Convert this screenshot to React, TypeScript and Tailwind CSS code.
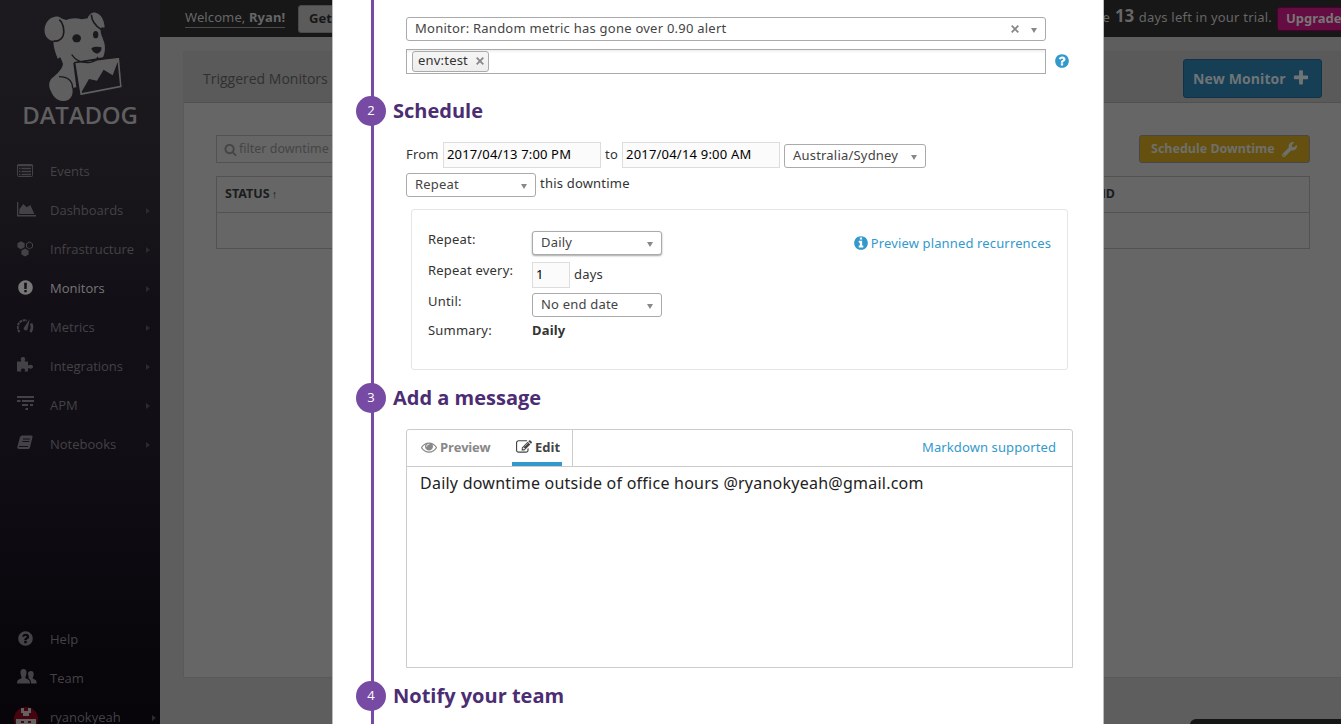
import React from "react";
import { FaWrench } from "react-icons/fa";

const CIRCLE =
  "M1664 896q0 209-103 385.5t-279.5 279.5-385.5 103-385.5-103-279.5-279.5-103-385.5 103-385.5 279.5-279.5 385.5-103 385.5 103 279.5 279.5 103 385.5z";
const PATHS = {
  question:
    "M1024 1376v-192q0-14-9-23t-23-9h-192q-14 0-23 9t-9 23v192q0 14 9 23t23 9h192q14 0 23-9t9-23zm256-672q0-88-55.5-163t-138.5-116-170-41q-243 0-371 213-15 24 8 42l132 100q7 6 19 6 16 0 25-12 53-68 86-92 34-24 86-24 48 0 85.5 26t37.5 59q0 38-20 61t-68 45q-63 28-115.5 86.5t-52.5 125.5v36q0 14 9 23t23 9h192q14 0 23-9t9-23q0-19 21.5-49.5t54.5-49.5q32-18 49-28.5t46-35 44.5-48 28-60.5 12.5-81z" +
    CIRCLE,
  info:
    "M1152 1376v-160q0-14-9-23t-23-9h-96v-512q0-14-9-23t-23-9h-320q-14 0-23 9t-9 23v160q0 14 9 23t23 9h96v320h-96q-14 0-23 9t-9 23v160q0 14 9 23t23 9h448q14 0 23-9t9-23zm-128-896v-160q0-14-9-23t-23-9h-192q-14 0-23 9t-9 23v160q0 14 9 23t23 9h192q14 0 23-9t9-23z" +
    CIRCLE,
  exclamation:
    "M896 128q209 0 385.5 103t279.5 279.5 103 385.5-103 385.5-279.5 279.5-385.5 103-385.5-103-279.5-279.5-103-385.5 103-385.5 279.5-279.5 385.5-103zm128 1247v-190q0-14-9-23.5t-22-9.5h-192q-13 0-23 10t-10 23v190q0 13 10 23t23 10h192q13 0 22-9.5t9-23.5zm-2-344l18-621q0-12-10-18-10-8-24-8h-220q-14 0-24 8-10 6-10 18l17 621q0 10 10 17.5t24 7.5h185q14 0 23.5-7.5t10.5-17.5z",
  plus: "M1600 736v192q0 40-28 68t-68 28h-416v416q0 40-28 68t-68 28h-192q-40 0-68-28t-28-68v-416h-416q-40 0-68-28t-28-68v-192q0-40 28-68t68-28h416v-416q0-40 28-68t68-28h192q40 0 68 28t28 68v416h416q40 0 68 28t28 68z",
  search:
    "M1216 832q0-185-131.5-316.5t-316.5-131.5-316.5 131.5-131.5 316.5 131.5 316.5 316.5 131.5 316.5-131.5 131.5-316.5zm512 832q0 52-38 90t-90 38q-54 0-90-38l-343-342q-179 124-399 124-143 0-273.5-55.5t-225-150-150-225-55.5-273.5 55.5-273.5 150-225 225-150 273.5-55.5 273.5 55.5 225 150 150 225 55.5 273.5q0 220-124 399l343 343q37 37 37 90z",
  eye: "M1664 960q-152-236-381-353 61 104 61 225 0 185-131.5 316.5t-316.5 131.5-316.5-131.5-131.5-316.5q0-121 61-225-229 117-381 353 133 205 333.5 326.5t434.5 121.5 434.5-121.5 333.5-326.5zm-720-384q0-20-14-34t-34-14q-125 0-214.5 89.5t-89.5 214.5q0 20 14 34t34 14 34-14 14-34q0-86 61-147t147-61q20 0 34-14t14-34zm848 384q0 34-20 69-140 230-376.5 368.5t-499.5 138.5-499.5-139-376.5-368q-20-35-20-69t20-69q140-229 376.5-368t499.5-139 499.5 139 376.5 368q20 35 20 69z",
  edit: "M888 1184l116-116-152-152-116 116v56h96v96h56zm440-720q-16-16-33 1l-350 350q-17 17-1 33t33-1l350-350q17-17 1-33zm80 594v190q0 119-84.5 203.5t-203.5 84.5h-832q-119 0-203.5-84.5t-84.5-203.5v-832q0-119 84.5-203.5t203.5-84.5h832q63 0 117 25 15 7 18 23 3 17-9 29l-49 49q-14 14-32 8-23-6-45-6h-832q-66 0-113 47t-47 113v832q0 66 47 113t113 47h832q66 0 113-47t47-113v-126q0-13 9-22l64-64q15-15 35-7t20 29zm-96-738l288 288-672 672h-288v-288zm444 132l-92 92-288-288 92-92q28-28 68-28t68 28l152 152q28 28 28 68t-28 68z",
};

function Glyph({ name, className }: { name: keyof typeof PATHS; className: string }) {
  return (
    <svg viewBox="0 0 1792 1792" className={className} fill="currentColor" fillRule="evenodd">
      <path d={PATHS[name]} />
    </svg>
  );
}

function DogLogo() {
  return (
    <svg viewBox="126 33 240 273" className="h-[91px] w-20" fill="#5f5f60">
      <path d="M158 122 C140 124 128 104 131 84 C134 66 146 52 162 50 C176 48 180 56 186 57 L196 60 C208 54 226 52 242 58 L260 55 C264 44 272 36 284 38 C300 42 310 60 311 82 C306 84 300 80 299 86 C297 98 305 112 309 126 C314 140 312 160 306 172 L221 186 L217 190 L226 262 L214 264 C218 288 208 302 188 303 C166 304 156 288 150 274 C140 256 144 240 158 230 C172 218 184 206 186 192 L184 186 L178 172 L170 176 L164 160 C160 146 156 134 158 122Z" />
      <path d="M221 188 L356 171 L364 263 L237 288Z" stroke="#1b191e" strokeWidth="4" />
      <path d="M350 186 L335 226 L308 209 L288 242 L264 237 L242 275 L243 279 L357 257Z" fill="#1b191e" />
      <path d="M175 59 C186 68 192 90 186 108 C181 120 168 126 158 122" fill="none" stroke="#1b191e" strokeWidth="5" />
      <path d="M271 44 C272 64 288 80 300 88" fill="none" stroke="#1b191e" strokeWidth="5" />
      <path d="M212 164 C226 184 246 190 268 187 C282 184 290 178 290 170 M174 230 C202 230 214 244 215 264" fill="none" stroke="#1b191e" strokeWidth="4" />
      <ellipse cx="227" cy="115" rx="13" ry="12" fill="#1b191e" />
      <ellipse cx="284" cy="104" rx="8" ry="11" fill="#1b191e" />
      <path d="M271 145 C280 139 294 140 301 142 C303 151 296 160 288 161 C281 160 273 154 271 145Z" fill="#1b191e" />
    </svg>
  );
}

const icons: Record<string, React.ReactNode> = {
  Events: (
    <svg viewBox="0 0 16 14" className="h-[14px] w-4" fill="none" stroke="currentColor">
      <rect x="0.5" y="0.5" width="15" height="12" rx="1" />
      <path d="M0 1.500h16M2 4.500h1.500M4.500 4.500h9.500M2 7.500h1.500M4.500 7.500h9.500M2 10.500h1.500M4.500 10.500h9.500" strokeWidth="1.400" />
    </svg>
  ),
  Dashboards: (
    <svg viewBox="0 0 19 15" className="h-[15px] w-[19px]" fill="currentColor">
      <path d="M0 0h1.300v13H19v1.400H0zM2.300 12V7.200L6.300 2l3.500 3.200L13.400 3l4 9z" />
    </svg>
  ),
  Infrastructure: (
    <svg viewBox="0 0 17 16" className="h-4 w-[17px]" fill="currentColor">
      <path d="M4 .2 7.600 2.200v4L4 8.200.4 6.200v-4zM8 7.400l3.600 2v4L8 15.500l-3.600-2v-4z" />
      <path d="M12.500 1 15.500 2.700v3.400L12.500 7.800 9.500 6.100V2.700z" fill="none" stroke="currentColor" />
    </svg>
  ),
  Monitors: <Glyph name="exclamation" className="h-[17px] w-[17px]" />,
  Metrics: (
    <svg viewBox="0 0 17 15" className="h-[15px] w-[17px]" fill="none" stroke="currentColor">
      <path d="M2.600 13A7 7 0 0 1 10 1.600" strokeWidth="2" strokeDasharray="2.800 0.700" />
      <path d="M14 4.500q2.200 4-.5 8.500" strokeWidth="2.600" />
      <path d="M12.800 0 10.500 10.500a2.100 2.100 0 0 1-3.800-1.500z" fill="currentColor" stroke="none" />
    </svg>
  ),
  Integrations: (
    <svg viewBox="0 0 16 15" className="mb-[3px] h-[15px] w-4" fill="currentColor">
      <path d="M0 4.500h4.500C3 2 4 0 6 0s3 2 1.500 4.500H11V8.500c3-1.500 5-.5 5 1.200s-2 2.800-5 1.300v3.500H7.500c1-2 .5-3-1.500-3s-2.500 1-1.500 3H0z" />
    </svg>
  ),
  APM: (
    <svg viewBox="0 0 17 14" className="mb-[3px] h-[14px] w-[17px]" stroke="currentColor" strokeWidth="2" fill="none">
      <path d="M0 1h17M0 5h3.500M5 5h12M5 9h6M13 9h3M8.500 13h2.500" />
    </svg>
  ),
  Notebooks: (
    <svg viewBox="0 0 16 15" className="mb-[2px] h-[15px] w-4" fill="currentColor">
      <path d="M5 .5h9.500q1.500 0 1 1.500L13 12.500q-.5 1.500-2 1.500H2Q0 14 .3 12L3 2Q3.500.5 5 .5z" />
      <path d="M6 4h7M5.300 6.500h7M2 11.500h9" stroke="#130f16" strokeWidth="1" />
    </svg>
  ),
  Help: <Glyph name="question" className="h-[17px] w-[17px]" />,
  Team: (
    <svg viewBox="0 0 20 15" className="mb-[2px] h-[15px] w-5" fill="currentColor">
      <path d="M6.500 0C9 0 9.800 2 9.500 4.500 9.300 6.500 8.300 7.500 8.300 9L12 11q1 .7 1 3.500H0Q0 11.700 1 11l3.700-2C4.700 7.500 3.700 6.500 3.500 4.500 3.200 2 4 0 6.500 0z" />
      <path d="M14 2c2.200 0 3 1.800 2.700 4-.2 1.500-1 2.500-1 3.500l3 1.500q1 .6 1 3.500H14q0-3.500-1.500-4.500l-1.500-1 .8-.5C11.700 7.500 11 6 11 4.500 11 3 12 2 14 2z" />
    </svg>
  ),
  ryanokyeah: (
    <svg viewBox="0 0 24 24" className="mt-[2px] h-6 w-6">
      <defs>
        <clipPath id="avatar">
          <circle cx="12" cy="12" r="12" />
        </clipPath>
      </defs>
      <g clipPath="url(#avatar)">
        <path fill="#46040f" d="M0 0h24v24H0z" />
        <path fill="#626262" d="M7 1h3v3h4V1h3v5h-2v3H9V6H7zM2 12h20v12H2z" />
        <path fill="#46040f" d="M7 14h3v2H7zM14 14h3v2h-3z" />
      </g>
    </svg>
  ),
};

function NavItem({ label, arrow = true, active = false }: { label: string; arrow?: boolean; active?: boolean }) {
  return (
    <div className={`flex h-[39px] shrink-0 items-center font-['Open_Sans',sans-serif] text-[13px] ${active ? "text-[#767677]" : "text-[#444246]"}`}>
      <span className={`flex w-[50px] ${label === "ryanokyeah" ? "pl-[14px]" : "pb-[2px] pl-[17px]"}`}>{icons[label]}</span>
      <span className="flex-1 whitespace-nowrap">{label}</span>
      {arrow && <span className="mr-[10px] h-0 w-0 border-y-[3.5px] border-l-4 border-y-transparent border-l-[#2c2a2f]" />}
    </div>
  );
}

function Sidebar() {
  return (
    <nav className="flex h-full w-40 shrink-0 flex-col bg-[linear-gradient(#1c1a1f_0%,#19171c_22%,#130f16_42%,#120e15_60%,#08050b_90%,#07040a_100%)]">
      <div className="flex h-[152px] shrink-0 flex-col items-center pt-[11px]">
        <div className="pl-[5px]">
          <DogLogo />
        </div>
        <div className="-mt-[4px] font-['Open_Sans',sans-serif] text-[24px] leading-[33px] font-semibold tracking-[-0.2px] text-[#5f5f60]">DATADOG</div>
      </div>
      <NavItem label="Events" arrow={false} />
      <NavItem label="Dashboards" />
      <NavItem label="Infrastructure" />
      <NavItem label="Monitors" active />
      <NavItem label="Metrics" />
      <NavItem label="Integrations" />
      <NavItem label="APM" />
      <NavItem label="Notebooks" />
      <div className="h-[156px] shrink-0" />
      <NavItem label="Help" arrow={false} />
      <NavItem label="Team" arrow={false} />
      <div className="w-[166px]">
        <NavItem label="ryanokyeah" />
      </div>
    </nav>
  );
}

function TopBar() {
  return (
    <header className="flex h-[37px] shrink-0 items-start bg-[#171717] font-['Noto_Sans',sans-serif] text-[13px] text-[#666]">
      <div className="mt-[7px] ml-[25px] h-[21px] w-[100px] border-b border-[#4a4a4a] leading-[20px] tracking-[0.1px] whitespace-nowrap">
        Welcome, <b>Ryan!</b>
      </div>
      <div className="mt-[5px] ml-[13px] h-7 w-[120px] rounded-[3px] border border-[#4a4a4a] bg-[#5b5b5b] pl-[10px] leading-6 font-bold text-[#171717]">Get Started</div>
      <div className="flex-1" />
      <div className="mt-[5px] flex items-baseline gap-[5px] leading-[22px] tracking-[0.2px] whitespace-nowrap">
        <span>You have</span>
        <b className="font-['Open_Sans',sans-serif] text-[17px] tracking-[-0.3px]">13</b>
        <span>days left in your trial.</span>
      </div>
      <div className="mt-[7px] -mr-[14px] ml-[5px] h-6 w-[78px] rounded-[3px] border border-[#4c0031] bg-[#650d42] pl-2 leading-5 font-bold text-[#777]">Upgrade</div>
    </header>
  );
}

function Backdrop() {
  return (
    <div className="flex h-full w-full">
      <Sidebar />
      <main className="flex min-w-0 flex-1 flex-col bg-[#5e5e5e]">
        <TopBar />
        <section className="mt-[15px] ml-6 flex h-[625px] w-[1157px] shrink-0 flex-col bg-[#666] shadow-[0_0_1px_#444]">
          <div className="flex h-[51px] shrink-0 items-center justify-between border-b border-[#515151] bg-[#5a5a5a] pt-[2px] pr-[19px] pl-[19px]">
            <span className="font-['Open_Sans',sans-serif] text-[14px] text-[#303030]">Triggered Monitors</span>
            <button className="flex h-[39px] w-[139px] items-center rounded-[3px] border border-[#113349] bg-[#163f56] pl-[9px] font-['Open_Sans',sans-serif] text-[14px] font-bold tracking-[0.1px] text-[#6f7477]">
              New Monitor
              <Glyph name="plus" className="ml-[6px] h-[18px] w-[18px]" />
            </button>
          </div>
          <div className="mt-8 box-content flex h-7 w-[1094px] shrink-0 justify-between pl-8">
            <div className="flex h-7 w-[200px] items-center border border-[#525252] pl-[7px] font-['Noto_Sans',sans-serif] text-[12.500px] text-[#454545]">
              <Glyph name="search" className="mr-[2px] h-[13px] w-[13px]" />
              <span className="whitespace-nowrap">filter downtime</span>
            </div>
            <button className="flex h-7 w-[171px] items-center rounded-[3px] border border-[#474747] bg-[#65500f] pl-[11px] font-['Noto_Sans',sans-serif] text-[12.500px] font-bold whitespace-nowrap text-[#6f6f6b]">
              Schedule Downtime
              <FaWrench className="ml-[7px] h-[15px] w-[15px]" />
            </button>
          </div>
          <div className="mt-[13px] ml-8 h-[73px] w-[1094px] shrink-0 border border-[#525252]">
            <div className="flex h-9 items-center border-b border-[#525252] pl-2 font-['Noto_Sans',sans-serif] text-[12.500px] font-bold text-[#1c1c1c]">
              <span className="w-[862px]">
                STATUS <span className="-ml-px text-[11px] leading-none">↑</span>
              </span>
              <span className="w-[30px] pr-[2px] text-right">END</span>
            </div>
          </div>
        </section>
      </main>
    </div>
  );
}

function Select({ value, className, raised = false }: { value: string; className: string; raised?: boolean }) {
  return (
    <div className={`flex h-6 shrink-0 items-center rounded-[3px] border border-[#aaa] bg-white pr-2 pl-2 ${className} ${raised ? "shadow-[0_1px_2px_rgba(0,0,0,0.35)]" : ""}`}>
      <span className="flex-1 whitespace-nowrap">{value}</span>
      <span className="mt-[3px] h-0 w-0 border-x-[3px] border-t-[5px] border-x-transparent border-t-[#888]" />
    </div>
  );
}

function TextInput({ value, className }: { value: string; className: string }) {
  return (
    <div className={`flex h-[26px] shrink-0 items-center border border-[#ddd] bg-[#fbfbfb] pl-[3px] whitespace-nowrap text-black ${className}`}>{value}</div>
  );
}

function StepHeading({ step, title }: { step: number; title: string }) {
  return (
    <div className="relative flex h-[30px] shrink-0 items-center pl-[23px] font-['Open_Sans',sans-serif] tracking-normal">
      <span className="flex h-[30px] w-[30px] items-center justify-center rounded-full bg-[#774aa4] text-[13px] text-white">{step}</span>
      <h2 className="ml-[7px] text-[20px] leading-[30px] font-bold whitespace-nowrap text-[#4c2d73]">{title}</h2>
    </div>
  );
}

function Cross() {
  return (
    <svg viewBox="0 0 8 8" className="h-2 w-2" stroke="#888" strokeWidth="1.800">
      <path d="M.7.700l6.600 6.600M7.300.700.700 7.300" />
    </svg>
  );
}

function DowntimeModal() {
  return (
    <div className="absolute top-0 left-[332px] flex h-full w-[772px] flex-col overflow-hidden border-x border-[#bbb] bg-white font-['Noto_Sans',sans-serif] text-[13px] tracking-[0.2px] text-[#333]">
      <div className="absolute top-0 left-[38px] h-full w-[3px] bg-[#774aa4]" />

      <div className="mt-[17px] ml-[73px] flex h-6 w-[640px] shrink-0 items-center rounded-[3px] border border-[#aaa] pr-2 pl-2 text-[#444]">
        <span className="flex-1 tracking-[0.24px] whitespace-nowrap">Monitor: Random metric has gone over 0.90 alert</span>
        <Cross />
        <span className="mt-[3px] ml-3 h-0 w-0 border-x-[3px] border-t-[5px] border-x-transparent border-t-[#888]" />
      </div>
      <div className="mt-2 ml-[73px] flex h-[25px] shrink-0 items-center">
        <div className="flex h-[25px] w-[640px] items-center border border-[#aaa] bg-[linear-gradient(#eee_0%,#fff_15%)] pl-[5px]">
          <div className="-mt-[1px] flex h-[21px] w-[77px] items-center justify-between rounded-[3px] border border-[#aaa] bg-[linear-gradient(#f4f4f4_20%,#eee_100%)] pr-1 pl-[5px] text-[#333]">
            <span className="whitespace-nowrap">env:test</span>
            <Cross />
          </div>
        </div>
        <Glyph name="question" className="-mt-px ml-2 h-4 w-4 text-[#3399cc]" />
      </div>

      <div className="h-[22px] shrink-0" />
      <StepHeading step={2} title="Schedule" />
      <div className="mt-4 ml-[73px] flex h-[26px] shrink-0 items-center">
        <span className="w-[37px]">From</span>
        <TextInput value="2017/04/13 7:00 PM" className="w-[158px] tracking-[0.15px]" />
        <span className="ml-1 w-[17px]">to</span>
        <TextInput value="2017/04/14 9:00 AM" className="w-[158px] tracking-[0.2px]" />
        <Select value="Australia/Sydney" className="mt-[2px] ml-1 w-[142px] text-[#444]" />
      </div>
      <div className="mt-[5px] ml-[73px] flex h-6 shrink-0 items-center">
        <Select value="Repeat" className="w-[130px] text-[#444]" />
        <span className="-mt-[2px] ml-1">this downtime</span>
      </div>

      <div className="mt-3 ml-[78px] flex h-[161px] w-[657px] shrink-0 rounded-[3px] border border-[#e5e5e5] pt-[21px] pr-4 pl-4">
        <div className="-mt-px flex w-[104px] flex-col">
          <span className="h-[31px] leading-[18px]">Repeat:</span>
          <span className="h-[31px] leading-[18px]">Repeat every:</span>
          <span className="h-[29px] leading-[18px]">Until:</span>
          <span className="leading-[18px]">Summary:</span>
        </div>
        <div className="flex flex-1 flex-col">
          <Select value="Daily" raised className="w-[130px] text-[#444]" />
          <div className="mt-[7px] flex items-center">
            <TextInput value="1" className="w-[38px]" />
            <span className="ml-1">days</span>
          </div>
          <Select value="No end date" className="mt-[5px] w-[130px] text-[#444]" />
          <b className="mt-1 leading-[18px]">Daily</b>
        </div>
        <div className="mt-px flex h-6 items-center tracking-[0.14px] text-[#3399cc]">
          <Glyph name="info" className="mr-[2px] mb-[3px] h-4 w-4" />
          <span className="whitespace-nowrap">Preview planned recurrences</span>
        </div>
      </div>

      <div className="h-[13px] shrink-0" />
      <StepHeading step={3} title="Add a message" />
      <div className="mt-4 ml-[73px] flex h-[239px] w-[667px] shrink-0 flex-col rounded-t-[3px] border border-[#ccc]">
        <div className="flex h-[37px] shrink-0 justify-between border-b border-[#ccc]">
          <div className="flex w-[166px] border-r border-[#ccc] font-['Open_Sans',sans-serif] font-bold tracking-[-0.2px]">
            <span className="ml-[14px] flex h-9 w-[91px] items-center text-[#888]">
              <Glyph name="eye" className="mr-[3px] mb-[2px] h-4 w-4" />
              Preview
            </span>
            <span className="flex h-9 w-[50px] items-center border-b-4 border-[#3399cc] pt-1 pl-1 tracking-normal text-[#444]">
              <Glyph name="edit" className="mr-[3px] mb-[2px] h-4 w-4 shrink-0" />
              Edit
            </span>
          </div>
          <span className="pr-4 leading-[35px] tracking-[0.1px] text-[#3399cc]">Markdown supported</span>
        </div>
        <p className="mt-1 ml-[13px] text-[16px] leading-6 tracking-[0.24px] whitespace-nowrap text-[#222]">Daily downtime outside of office hours @ryanokyeah@gmail.com</p>
      </div>

      <div className="h-[13px] shrink-0" />
      <StepHeading step={4} title="Notify your team" />
    </div>
  );
}

export default function App() {
  return (
    <div className="relative h-[724px] w-[1341px] overflow-hidden">
      <Backdrop />
      <div className="absolute top-[719px] left-[1190px] h-3 w-[160px] rounded-tl-[6px] bg-[#141615]" />
      <DowntimeModal />
    </div>
  );
}
